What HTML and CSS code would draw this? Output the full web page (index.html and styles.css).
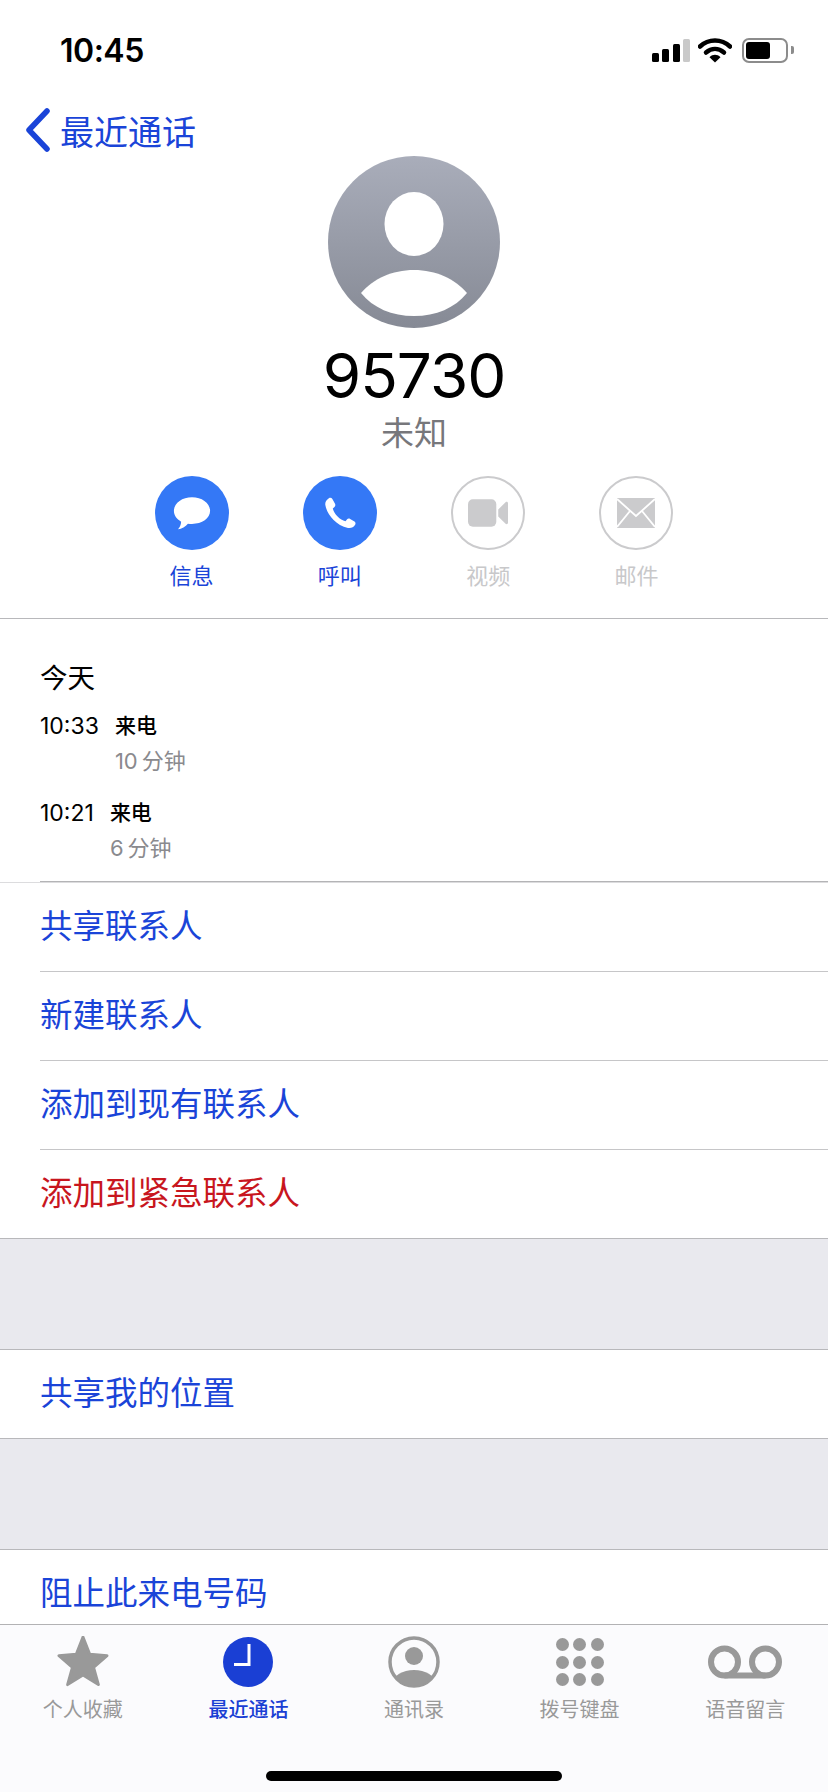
FILE: index.html
```html
<!DOCTYPE html>
<html lang="zh-CN">
<head>
<meta charset="UTF-8">
<meta name="viewport" content="width=device-width, initial-scale=1.0">
<title>95730</title>
<link rel="stylesheet" href="styles.css">
</head>
<body>
<div class="phone">
  <div class="scroll">
    <div class="status-bar">
      <span class="clock">10:45</span>
      <div class="status-icons">
        <div class="signal">
          <span class="bar b1"></span>
          <span class="bar b2"></span>
          <span class="bar b3"></span>
          <span class="bar b4"></span>
        </div>
        <svg class="wifi" width="34" height="26" viewBox="0 0 34 26">
          <path d="M2 9.5C10.500 1.500 23.500 1.500 32 9.500" fill="none" stroke="#000" stroke-width="4.500" stroke-linecap="round"/>
          <path d="M8 15.500C13.500 10.800 20.500 10.800 26 15.500" fill="none" stroke="#000" stroke-width="4.500" stroke-linecap="round"/>
          <path d="M11.500 20.200C15 17 19 17 22.500 20.200L17 25.500Z" fill="#000"/>
        </svg>
        <div class="battery"><span class="battery-fill"></span></div>
        <span class="battery-nub"></span>
      </div>
    </div>

    <a class="back">
      <svg width="26" height="44" viewBox="0 0 26 44">
        <path d="M22 3L4 22L22 41" fill="none" stroke="#1a44d8" stroke-width="5.500" stroke-linecap="round" stroke-linejoin="round"/>
      </svg>
      <span>最近通话</span>
    </a>

    <div class="contact">
      <svg class="avatar" width="172" height="172" viewBox="0 0 172 172">
        <defs>
          <linearGradient id="avatarFill" x1="0" y1="0" x2="0" y2="1">
            <stop offset="0" stop-color="#a9adba"/>
            <stop offset="1" stop-color="#868a95"/>
          </linearGradient>
        </defs>
        <circle cx="86" cy="86" r="86" fill="url(#avatarFill)"/>
        <ellipse cx="86" cy="68" rx="29.500" ry="32" fill="#fff"/>
        <path d="M33 137C45 123 64 114 86 114C108 114 127 123 139 137C127 152 108 160 86 160C64 160 45 152 33 137Z" fill="#fff"/>
      </svg>
      <div class="number">95730</div>
      <div class="caption">未知</div>
    </div>

    <div class="actions">
      <div class="action">
        <div class="action-icon on">
          <svg width="38" height="35" viewBox="0 0 42 38">
            <path d="M21 1C32 1 41 7.500 41 16C41 24.500 32 30.500 21 30.500C19.500 30.500 18 30.400 16.500 30.200C14 33.500 9.500 36 5.500 36.300C7.500 34.300 8.800 31.500 9 28C4 25.300 1 21 1 16C1 7.500 10 1 21 1Z" fill="#fff"/>
          </svg>
        </div>
        <span class="action-label">信息</span>
      </div>
      <div class="action">
        <div class="action-icon on">
          <svg width="32" height="32" viewBox="0 0 36 36">
            <path d="M5.500 1.500C7 .500 8.600 1 9.400 2.300L12.400 7.700C13.100 9 12.800 10.300 11.800 11.200L9.900 12.800C10.800 16 12.600 19.300 15.300 21.900C17.900 24.600 21 26.400 24.200 27.300L25.800 25.300C26.700 24.200 28.200 24 29.400 24.700L34.300 27.700C35.500 28.500 35.800 30 35 31.200C33.300 34 30.300 35.500 27 34.800C20.500 33.500 15 30 10.500 25.500C6 21 2.500 15 1.500 9C1 6 2.700 3.200 5.500 1.500Z" fill="#fff"/>
          </svg>
        </div>
        <span class="action-label">呼叫</span>
      </div>
      <div class="action off">
        <div class="action-icon">
          <svg width="40" height="28" viewBox="0 0 41 28">
            <rect x="0" y="0" width="29" height="28" rx="5" fill="#cbcbcd"/>
            <path d="M31 10.500L38.500 3C39.500 2 41 2.700 41 4V24C41 25.300 39.500 26 38.500 25L31 17.500Z" fill="#cbcbcd"/>
          </svg>
        </div>
        <span class="action-label">视频</span>
      </div>
      <div class="action off">
        <div class="action-icon">
          <svg width="38" height="30" viewBox="0 0 38 30">
            <rect width="38" height="30" fill="#cbcbcd"/>
            <path d="M0 1L19 18L38 1M0 29L13 13M38 29L25 13" fill="none" stroke="#fff" stroke-width="1.800"/>
          </svg>
        </div>
        <span class="action-label">邮件</span>
      </div>
    </div>

    <div class="history">
      <div class="calls">
        <div class="day">今天</div>
        <div class="call">
          <span class="call-time">10:33</span>
          <div>
            <div class="call-type">来电</div>
            <div class="call-len">10&#8201;分钟</div>
          </div>
        </div>
        <div class="call">
          <span class="call-time">10:21</span>
          <div>
            <div class="call-type">来电</div>
            <div class="call-len">6&#8201;分钟</div>
          </div>
        </div>
      </div>
    </div>

    <ul class="group">
      <li class="row">共享联系人</li>
      <li class="row">新建联系人</li>
      <li class="row">添加到现有联系人</li>
      <li class="row danger">添加到紧急联系人</li>
    </ul>
    <ul class="group">
      <li class="row">共享我的位置</li>
    </ul>
    <ul class="group">
      <li class="row">阻止此来电号码</li>
    </ul>
  </div>

  <div class="tabbar">
    <div class="tabs">
      <div class="tab">
        <svg width="56" height="52" viewBox="0 1 56 54">
          <path d="M28 2L35 20L53 21.500L39 33.500L44 51.500L28 41.500L12 51.500L17 33.500L3 21.500L21 20Z" fill="#999" stroke="#999" stroke-width="3" stroke-linejoin="round"/>
        </svg>
        <span>个人收藏</span>
      </div>
      <div class="tab active">
        <svg width="50" height="52" viewBox="0 -1 50 52">
          <circle cx="25" cy="25" r="25" fill="#1a3fd4"/>
          <path d="M26 7V27.500H11" fill="none" stroke="#fff" stroke-width="3"/>
        </svg>
        <span>最近通话</span>
      </div>
      <div class="tab">
        <svg width="52" height="52" viewBox="0 0 52 52">
          <defs>
            <clipPath id="personClip"><circle cx="26" cy="26" r="24"/></clipPath>
          </defs>
          <circle cx="26" cy="26" r="24" fill="none" stroke="#999" stroke-width="3.500"/>
          <circle cx="26" cy="20" r="9" fill="#999"/>
          <ellipse cx="26" cy="47" rx="21" ry="13" fill="#999" clip-path="url(#personClip)"/>
        </svg>
        <span>通讯录</span>
      </div>
      <div class="tab">
        <div class="keypad">
          <i></i><i></i><i></i>
          <i></i><i></i><i></i>
          <i></i><i></i><i></i>
        </div>
        <span>拨号键盘</span>
      </div>
      <div class="tab">
        <svg width="74" height="52" viewBox="0 -9 74 52">
          <circle cx="16.500" cy="17" r="13.500" fill="none" stroke="#999" stroke-width="6"/>
          <circle cx="57.500" cy="17" r="13.500" fill="none" stroke="#999" stroke-width="6"/>
          <path d="M16.500 30.500H57.500" stroke="#999" stroke-width="6"/>
        </svg>
        <span>语音留言</span>
      </div>
    </div>
    <div class="home-bar"></div>
  </div>
</div>
</body>
</html>
```

FILE: styles.css
```css
body {
  margin: 0;
  background-color: #fff;
  font-family: Inter, "Noto Sans CJK SC", sans-serif;
  color: #000;
}

.phone {
  display: flex;
  flex-direction: column;
  width: 828px;
  height: 1792px;
  overflow: hidden;
}

.scroll {
  flex: 1;
  min-height: 0;
  overflow: hidden;
  background-color: #e9e9ee;
}

.status-bar,
.back,
.contact,
.actions,
.history,
.group {
  background-color: #fff;
}

/* status bar */
.status-bar {
  display: flex;
  justify-content: space-between;
  align-items: center;
  height: 100px;
  padding: 0 34px 0 60px;
  box-sizing: border-box;
}

.clock {
  font-family: Inter, sans-serif;
  font-size: 32px;
  font-weight: 600;
  letter-spacing: -0.5px;
}

.status-icons {
  display: flex;
  align-items: center;
}

.signal {
  display: flex;
  align-items: flex-end;
  gap: 3.500px;
  height: 24px;
  margin-right: 8px;
}

.bar {
  width: 7px;
  border-radius: 1.500px;
  background-color: #000;
}

.b1 { height: 9px; }
.b2 { height: 13px; }
.b3 { height: 18px; }
.b4 { height: 23px; background-color: #c9c9c9; }

.wifi {
  margin-right: 10px;
}

.battery {
  width: 46px;
  height: 25px;
  padding: 2px;
  border: 2px solid #8c8c8c;
  border-radius: 7px;
  box-sizing: border-box;
}

.battery-fill {
  display: block;
  width: 24px;
  height: 100%;
  border-radius: 3px;
  background-color: #000;
}

.battery-nub {
  width: 3px;
  height: 8px;
  margin-left: 3px;
  border-radius: 0 2px 2px 0;
  background-color: #8c8c8c;
}

/* back link */
.back {
  display: flex;
  align-items: center;
  gap: 9px;
  height: 56px;
  padding-top: 4px;
  padding-left: 25px;
  box-sizing: border-box;
  color: #1a44d8;
  font-size: 34px;
}

.contact {
  display: flex;
  flex-direction: column;
  align-items: center;
}

.avatar {
  display: block;
}

.number {
  margin-top: 12px;
  font-family: Inter, sans-serif;
  font-size: 62px;
  letter-spacing: -1px;
  line-height: 71px;
}

.caption {
  color: #77777b;
  font-size: 33px;
  line-height: 44px;
}

/* action buttons */
.actions {
  display: grid;
  grid-template-columns: repeat(4, 148.300px);
  justify-content: center;
  padding-top: 21px;
  padding-bottom: 27px;
}

.action {
  display: flex;
  flex-direction: column;
  align-items: center;
  color: #1a44d8;
}

.action.off {
  color: #c8c8ca;
}

.action-icon {
  display: flex;
  align-items: center;
  justify-content: center;
  width: 74px;
  height: 74px;
  border: 2px solid #cbcbcd;
  border-radius: 50%;
  box-sizing: border-box;
}

.action-icon.on {
  border: 0;
  background-color: #3478f6;
}

.action-label {
  margin-top: 11px;
  font-size: 22px;
  line-height: 30px;
}

/* call history */
.history {
  border-top: 1px solid #b8b8bb;
  border-bottom: 1px solid #dcdcde;
}

.calls {
  height: 263px;
  margin-left: 40px;
  padding-top: 39px;
  border-bottom: 1px solid #b4b4b6;
  box-sizing: border-box;
}

.day {
  font-size: 27.500px;
  line-height: 40px;
}

.call {
  display: flex;
  gap: 16px;
  height: 87px;
  padding-top: 10px;
  box-sizing: border-box;
}

.call-time {
  font-size: 23px;
  line-height: 36px;
}

.call-type {
  font-size: 21px;
  font-weight: 500;
  line-height: 36px;
}

.call-len {
  color: #8a8a8e;
  font-size: 22px;
  line-height: 34px;
}

/* link rows */
.group {
  margin: 0 0 110px;
  padding: 0 0 0 40px;
  list-style: none;
  border-bottom: 1px solid #b8b8bb;
}

.group + .group {
  border-top: 1px solid #b8b8bb;
}

.row {
  height: 88px;
  color: #1a44d8;
  font-size: 32.500px;
  line-height: 88px;
  border-bottom: 1px solid #c6c6c8;
}

.row:last-child {
  border-bottom: 0;
}

.danger {
  color: #c8161e;
}

/* tab bar */
.tabbar {
  height: 167px;
  border-top: 1px solid #b2b2b4;
  background-color: #fbfbfd;
}

.tabs {
  display: grid;
  grid-template-columns: repeat(5, 1fr);
}

.tab {
  display: flex;
  flex-direction: column;
  align-items: center;
  color: #999;
  font-size: 20px;
}

.tab svg,
.keypad {
  height: 52px;
  margin-top: 11px;
  margin-bottom: 8px;
}

.tab span {
  line-height: 28px;
}

.active {
  color: #1a3fd4;
  font-weight: 500;
}

.keypad {
  display: grid;
  grid-template-columns: repeat(3, 13px);
  grid-auto-rows: 13px;
  gap: 4.500px;
  align-content: center;
}

.keypad i {
  border-radius: 50%;
  background-color: #999;
}

.home-bar {
  width: 296px;
  height: 10px;
  margin: 47px auto 0;
  border-radius: 5px;
  background-color: #000;
}
```
